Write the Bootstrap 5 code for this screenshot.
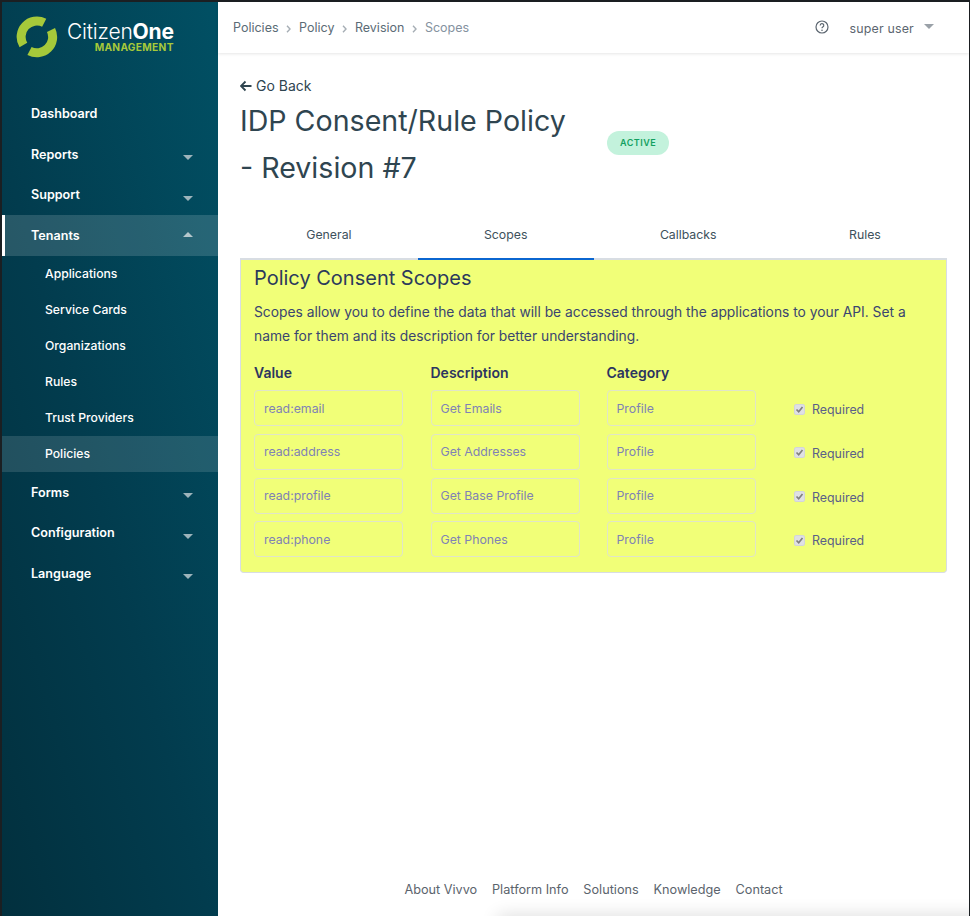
<!DOCTYPE html>
<html>
<head>
  <title>Policy Consent Scopes</title>
  <link href="https://cdn.jsdelivr.net/npm/bootstrap@5.3.0/dist/css/bootstrap.min.css" rel="stylesheet" />
  <style>
    html, body { height: 100%; }
    body { font-family: Inter, "Liberation Sans", sans-serif; color: #2f4550; background: #fff; overflow: hidden; }
    .app-frame { height: 916px; border-top: 2px solid #1b1f22; border-left: 2px solid #1b1f22; border-right: 1px solid #1b1f22; }
    .side-panel { width: 216px; flex: none; background: linear-gradient(75deg, #02303e 0%, #023c4e 45%, #015064 100%); color: #fff; }
    .brand-row { height: 91.5px; padding: 14px 0 0 14px; gap: 9px; }
    .brand-text { padding-top: 6px; }
    .brand-name { font-size: 21px; line-height: 20px; letter-spacing: -.2px; font-weight: 300; }
    .brand-name b { font-weight: 700; }
    .brand-sub { font-size: 10.2px; line-height: 8px; margin-top: 1px; font-weight: 700; color: #a6c93a; text-align: right; letter-spacing: .3px; }
    .side-link { height: 40.5px; padding: 2px 25px 0 29px; font-size: 12.6px; font-weight: 600; color: #fff; text-decoration: none; }
    .side-link.is-open { background: rgba(255,255,255,.15); border-left: 3px solid #fff; padding-left: 26px; }
    .side-sub { height: 36px; padding: 2px 0 0 43px; font-size: 12.2px; font-weight: 500; color: #fff; text-decoration: none; }
    .side-sub.is-current { background: rgba(255,255,255,.13); margin-bottom: .5px; }
    .caret-down { width: 0; height: 0; border-left: 5px solid transparent; border-right: 5px solid transparent; border-top: 5px solid #9db4bb; margin-top: 5px; }
    .caret-up { width: 0; height: 0; border-left: 5px solid transparent; border-right: 5px solid transparent; border-bottom: 5px solid #b5c7cc; margin-top: -3px; }
    .main-col { min-width: 0; }
    .top-strip { height: 51px; padding: 0 35px 0 15px; box-shadow: 0 1px 3px rgba(0,0,0,.1); font-size: 12.5px; }
    .crumb-list { gap: 7.75px; color: #5b6b76; padding-top: 2px; }
    .crumb-now { color: #8592a0; }
    .user-name { color: #5c6670; font-size: 12.4px; letter-spacing: .2px; margin: 3px 10px 0 20px; }
    .caret-user { width: 0; height: 0; border-left: 5px solid transparent; border-right: 5px solid transparent; border-top: 5px solid #9aa1a8; margin-top: -1px; }
    .page-body { padding: 23px 22px 0 22px; }
    .go-back { font-size: 14px; line-height: 20px; color: #2f4550; text-decoration: none; margin-bottom: 1px; }
    .page-title { font-size: 28.6px; line-height: 47px; font-weight: 400; color: #2f4550; width: 367px; padding-right: 27px; margin: 0; }
    .status-pill { background: #c3f2dc; color: #12a060; font-size: 9px; font-weight: 600; letter-spacing: .5px; line-height: 24px; height: 24px; padding: 0 13px; border-radius: 12px; margin-bottom: 2px; }
    .tab-strip { margin-top: 24px; border-bottom: 2px solid #d8dde3; height: 45px; }
    .tab-strip .nav-link { color: #3d515c; font-size: 12.3px; height: 45px; padding: 11px 0 0; border: 0; border-radius: 0; text-align: center; background: none; }
    .tab-strip .nav-link.active { border-bottom: 2px solid #0b66d0; color: #3d515c; }
    .scope-card { background: #f1ff78; border: 1px solid #d8dde3; border-top: 0; border-radius: 0 0 4px 4px; height: 313px; padding: 5px 13px 0; }
    .scope-title { font-size: 20px; line-height: 26px; margin: 0 0 9px; font-weight: 400; color: #2c3a5c; }
    .scope-text { font-size: 13.8px; line-height: 24px; margin: 0 0 15px; color: #3a4570; }
    .scope-head { font-size: 14px; font-weight: 600; line-height: 20px; margin-bottom: 7px; color: #2c3560; }
    .scope-row { height: 43.75px; }
    .scope-input { width: 149px; height: 36px; background: transparent; border: 1px solid #e0e5c8; border-radius: 4px; padding: 0 9px; font-size: 12.3px; color: #7f82b5; box-shadow: none; }
    .scope-input::placeholder { color: #7f82b5; }
    .scope-input:focus { background: transparent; }
    .scope-check { padding: 5px 0 0 11px; font-size: 12.4px; color: #5a6088; height: 36px; }
    .scope-check input { appearance: none; width: 11px; height: 11px; margin: 0 7px 3px 0; background: #dfe0e4 url("data:image/svg+xml,%3Csvg xmlns='http://www.w3.org/2000/svg' viewBox='0 0 11 11'%3E%3Cpath d='M2.5 5.5L4.7 7.8 8.5 3' fill='none' stroke='%23808080' stroke-width='1.7'/%3E%3C/svg%3E") center / 11px no-repeat; border: 1px solid #d3d5da; border-radius: 2px; }
    .foot-links { font-size: 12.7px; gap: 14.8px; color: #5b646d; padding-bottom: 17px; position: relative; overflow: hidden; }
    .foot-links a { color: #5b646d; text-decoration: none; }
    .foot-links::after { content: ""; position: absolute; left: 280px; right: -40px; bottom: -14px; height: 14px; box-shadow: 0 0 18px rgba(0,0,0,.16); }
    .cols-4 { display: grid; grid-template-columns: 176.5px 176px 176.5px 1fr; }
  </style>
</head>
<body>
  <div class="app-frame d-flex">
    <div class="side-panel d-flex flex-column">
      <div class="brand-row d-flex align-items-start">
        <svg width="42" height="42" viewBox="0 0 42 42">
          <path d="M28.2 6.8 A15.8 15.8 0 0 0 7.4 29" fill="none" stroke="#a6c93a" stroke-width="9"/>
          <path d="M35 14 A15.8 15.8 0 0 1 13.5 35" fill="none" stroke="#a6c93a" stroke-width="9"/>
        </svg>
        <div class="brand-text">
          <div class="brand-name">Citizen<b>One</b></div>
          <div class="brand-sub">MANAGEMENT</div>
        </div>
      </div>
      <a class="side-link d-flex align-items-center justify-content-between" href="#">Dashboard</a>
      <a class="side-link d-flex align-items-center justify-content-between" href="#">Reports <span class="caret-down"></span></a>
      <a class="side-link d-flex align-items-center justify-content-between" href="#">Support <span class="caret-down"></span></a>
      <a class="side-link is-open d-flex align-items-center justify-content-between" href="#">Tenants <span class="caret-up"></span></a>
      <a class="side-sub d-flex align-items-center" href="#">Applications</a>
      <a class="side-sub d-flex align-items-center" href="#">Service Cards</a>
      <a class="side-sub d-flex align-items-center" href="#">Organizations</a>
      <a class="side-sub d-flex align-items-center" href="#">Rules</a>
      <a class="side-sub d-flex align-items-center" href="#">Trust Providers</a>
      <a class="side-sub is-current d-flex align-items-center" href="#">Policies</a>
      <a class="side-link d-flex align-items-center justify-content-between" href="#">Forms <span class="caret-down"></span></a>
      <a class="side-link d-flex align-items-center justify-content-between" href="#">Configuration <span class="caret-down"></span></a>
      <a class="side-link d-flex align-items-center justify-content-between" href="#">Language <span class="caret-down"></span></a>
    </div>
    <div class="main-col flex-grow-1 d-flex flex-column">
      <div class="top-strip d-flex align-items-center justify-content-between">
        <div class="crumb-list d-flex align-items-center">
          <span>Policies</span>
          <svg width="5" height="8" viewBox="0 0 5 8"><path d="M1 .8L4 4 1 7.2" fill="none" stroke="#a6aeb5" stroke-width="1.4"/></svg>
          <span>Policy</span>
          <svg width="5" height="8" viewBox="0 0 5 8"><path d="M1 .8L4 4 1 7.2" fill="none" stroke="#a6aeb5" stroke-width="1.4"/></svg>
          <span>Revision</span>
          <svg width="5" height="8" viewBox="0 0 5 8"><path d="M1 .8L4 4 1 7.2" fill="none" stroke="#a6aeb5" stroke-width="1.4"/></svg>
          <span class="crumb-now">Scopes</span>
        </div>
        <div class="d-flex align-items-center">
          <svg width="14" height="14" viewBox="0 0 14 14">
            <circle cx="7" cy="7" r="6" fill="none" stroke="#5c6670" stroke-width="1.2"/>
            <path d="M5.2 5.4 A1.8 1.8 0 1 1 7.6 7.1 C7.1 7.3 7 7.6 7 8.3" fill="none" stroke="#5c6670" stroke-width="1.2"/>
            <circle cx="7" cy="10.2" r=".8" fill="#5c6670"/>
          </svg>
          <span class="user-name">super user</span>
          <span class="caret-user"></span>
        </div>
      </div>
      <div class="page-body flex-grow-1">
        <a class="go-back d-flex align-items-center gap-1" href="#">
          <svg width="12" height="12" viewBox="0 0 12 12"><path d="M11.5 6H1.5M5.5 1.5L1 6l4.5 4.5" fill="none" stroke="#2f4550" stroke-width="1.8"/></svg>
          Go Back
        </a>
        <div class="d-flex align-items-center">
          <h1 class="page-title">IDP Consent/Rule Policy - Revision #7</h1>
          <span class="status-pill">ACTIVE</span>
        </div>
        <ul class="nav nav-fill tab-strip">
          <li class="nav-item"><a class="nav-link" href="#">General</a></li>
          <li class="nav-item"><a class="nav-link active" href="#">Scopes</a></li>
          <li class="nav-item"><a class="nav-link" href="#">Callbacks</a></li>
          <li class="nav-item"><a class="nav-link" href="#">Rules</a></li>
        </ul>
        <div class="scope-card">
          <h2 class="scope-title">Policy Consent Scopes</h2>
          <p class="scope-text">Scopes allow you to define the data that will be accessed through the applications to your API. Set a name for them and its description for better understanding.</p>
          <div class="cols-4 scope-head"><div>Value</div><div>Description</div><div>Category</div></div>
          <div class="cols-4 scope-row">
            <input class="form-control scope-input" placeholder="read:email" />
            <input class="form-control scope-input" placeholder="Get Emails" />
            <input class="form-control scope-input" placeholder="Profile" />
            <label class="scope-check d-flex align-items-center"><input type="checkbox" checked disabled />Required</label>
          </div>
          <div class="cols-4 scope-row">
            <input class="form-control scope-input" placeholder="read:address" />
            <input class="form-control scope-input" placeholder="Get Addresses" />
            <input class="form-control scope-input" placeholder="Profile" />
            <label class="scope-check d-flex align-items-center"><input type="checkbox" checked disabled />Required</label>
          </div>
          <div class="cols-4 scope-row">
            <input class="form-control scope-input" placeholder="read:profile" />
            <input class="form-control scope-input" placeholder="Get Base Profile" />
            <input class="form-control scope-input" placeholder="Profile" />
            <label class="scope-check d-flex align-items-center"><input type="checkbox" checked disabled />Required</label>
          </div>
          <div class="cols-4 scope-row">
            <input class="form-control scope-input" placeholder="read:phone" />
            <input class="form-control scope-input" placeholder="Get Phones" />
            <input class="form-control scope-input" placeholder="Profile" />
            <label class="scope-check d-flex align-items-center"><input type="checkbox" checked disabled />Required</label>
          </div>
        </div>
      </div>
      <div class="foot-links d-flex justify-content-center">
        <a href="#">About Vivvo</a><a href="#">Platform Info</a><a href="#">Solutions</a><a href="#">Knowledge</a><a href="#">Contact</a>
      </div>
    </div>
  </div>
  <script src="https://cdn.jsdelivr.net/npm/bootstrap@5.3.0/dist/js/bootstrap.bundle.min.js"></script>
</body>
</html>
